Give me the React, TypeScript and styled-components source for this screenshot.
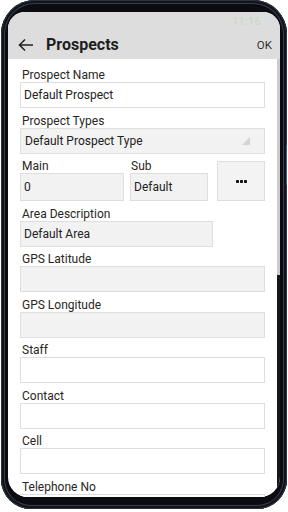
import { FC } from "react";
import styled, { createGlobalStyle } from "styled-components";

const GlobalStyle = createGlobalStyle`
  html, body {
    margin: 0;
    padding: 0;
    background: #ffffff;
  }
  body {
    font-family: Roboto, "Liberation Sans", Arial, sans-serif;
  }
  * {
    box-sizing: border-box;
  }
`;

interface FieldProps {
  label: string;
  value?: string;
  filled?: boolean;
  width?: number;
}

const Field: FC<FieldProps> = ({ label, value, filled, width }) => {
  return (
    <FieldWrapper style={width ? { width } : undefined}>
      <Label>{label}</Label>
      <Box $filled={filled}>{value}</Box>
    </FieldWrapper>
  );
};

const SelectField: FC<{ label: string; value: string }> = ({
  label,
  value,
}) => {
  return (
    <FieldWrapper>
      <Label>{label}</Label>
      <SelectBox>
        <span>{value}</span>
        <svg width="8" height="8" viewBox="0 0 8 8">
          <polygon points="8,0 8,8 0,8" fill="#d4d4d4" />
        </svg>
      </SelectBox>
    </FieldWrapper>
  );
};

const App: FC = () => {
  return (
    <>
      <GlobalStyle />
      <Page>
        <Phone>
          <Screen>
            <Header>
              <StatusRow>
                <Time>11:16</Time>
              </StatusRow>
              <Toolbar>
                <BackIcon />
                <Title>Prospects</Title>
                <Ok>OK</Ok>
              </Toolbar>
            </Header>
            <Body>
              <Content>
                <Field label="Prospect Name" value="Default Prospect" />
                <SelectField
                  label="Prospect Types"
                  value="Default Prospect Type"
                />
                <CodeRow>
                  <Col $width={104}>
                    <Label>Main</Label>
                    <Box $filled $tall>
                      0
                    </Box>
                  </Col>
                  <Col $width={78}>
                    <Label $indent={1}>Sub</Label>
                    <Box $filled $tall>
                      Default
                    </Box>
                  </Col>
                  <MoreButton aria-label="More">
                    <MoreIcon />
                  </MoreButton>
                </CodeRow>
                <Field
                  label="Area Description"
                  value="Default Area"
                  filled
                  width={193}
                />
                <Field label="GPS Latitude" filled />
                <Field label="GPS Longitude" filled />
                <Field label="Staff" />
                <Field label="Contact" />
                <Field label="Cell" />
                <Field label="Telephone No" />
              </Content>
              <Track>
                <Thumb />
              </Track>
            </Body>
          </Screen>
        </Phone>
      </Page>
    </>
  );
};

const BackIcon: FC = () => (
  <svg width="15" height="12" viewBox="0 0 15 12" fill="none">
    <path
      d="M14.5 6H1.5M6.5 1L1.5 6L6.5 11"
      stroke="#222"
      strokeWidth="1.5"
      strokeLinecap="square"
    />
  </svg>
);

const MoreIcon: FC = () => (
  <svg width="11" height="3" viewBox="0 0 11 3">
    <rect x="0" y="0" width="3" height="3" rx="0.8" fill="#111" />
    <rect x="4" y="0" width="3" height="3" rx="0.8" fill="#111" />
    <rect x="8" y="0" width="3" height="3" rx="0.8" fill="#111" />
  </svg>
);

const Page = styled.div`
  width: 288px;
  height: 512px;
  padding-left: 1px;
  overflow: hidden;
`;

const Phone = styled.div`
  position: relative;
  width: 286px;
  height: 509px;
  padding: 12px 7px;
  border-radius: 34px 34px 30px 30px;
  background: #0a0c11;
  box-shadow: inset 0 0 0 1px #2c3444, inset 0 0 0 3px #111318,
    inset 0 0 0 4px #3a3f48;

  &::after {
    content: "";
    position: absolute;
    right: 0;
    top: 145px;
    width: 1px;
    height: 40px;
    background: #3b5a8c;
  }
`;

const Screen = styled.div`
  height: 485px;
  border-radius: 17px 17px 20px 20px;
  overflow: hidden;
  background: #ffffff;
  display: flex;
  flex-direction: column;
`;

const Header = styled.div`
  background: #dddddd;
  height: 47px;
  display: flex;
  flex-direction: column;
  flex-shrink: 0;
`;

const StatusRow = styled.div`
  height: 18px;
  display: flex;
  justify-content: flex-end;
  align-items: center;
  padding: 1px 19px 0 0;
`;

const Time = styled.span`
  font-size: 11px;
  color: #c9d8c2;
  letter-spacing: 0.3px;
`;

const Toolbar = styled.div`
  height: 29px;
  display: flex;
  align-items: center;
  padding: 0 8px 0 10px;
`;

const Title = styled.span`
  flex: 1;
  margin-left: 13px;
  font-size: 16px;
  font-weight: 700;
  color: #1e1e1e;
`;

const Ok = styled.span`
  font-size: 11.5px;
  color: #333;
`;

const Body = styled.div`
  flex: 1;
  min-height: 0;
  display: flex;
`;

const Content = styled.div`
  flex: 1;
  overflow: hidden;
  padding: 9px 12px 0 12px;
  display: flex;
  flex-direction: column;
  gap: 5.5px;
`;

const Track = styled.div`
  width: 3px;
  background: #15171b;
`;

const Thumb = styled.div`
  height: 216px;
  background: #cfc8cc;
`;

const FieldWrapper = styled.div`
  display: flex;
  flex-direction: column;
  flex-shrink: 0;
`;

const Label = styled.div<{ $indent?: number }>`
  font-size: 12px;
  line-height: 14px;
  padding-left: ${({ $indent }) => $indent ?? 2}px;
  color: #2a2622;
`;

const Box = styled.div<{ $filled?: boolean; $tall?: boolean }>`
  height: ${({ $tall }) => ($tall ? 28 : 26)}px;
  border: 1px solid #dedede;
  background: ${({ $filled }) => ($filled ? "#f2f2f2" : "#ffffff")};
  padding-left: 3px;
  display: flex;
  align-items: center;
  font-size: 12px;
  color: #222;
`;

const SelectBox = styled(Box)`
  background: #f2f2f2;
  justify-content: space-between;
  padding: 0 14px 0 4px;

  & svg {
    margin-top: 1px;
  }
`;

const CodeRow = styled.div`
  display: flex;
  align-items: flex-end;
  flex-shrink: 0;
`;

const Col = styled.div<{ $width: number }>`
  width: ${({ $width }) => $width}px;
  margin-right: 6px;
  display: flex;
  flex-direction: column;
`;

const MoreButton = styled.div`
  width: 48px;
  height: 40px;
  margin-left: 3px;
  border: 1px solid #dedede;
  background: #f3f3f3;
  display: flex;
  align-items: center;
  justify-content: center;
`;

export default App;
